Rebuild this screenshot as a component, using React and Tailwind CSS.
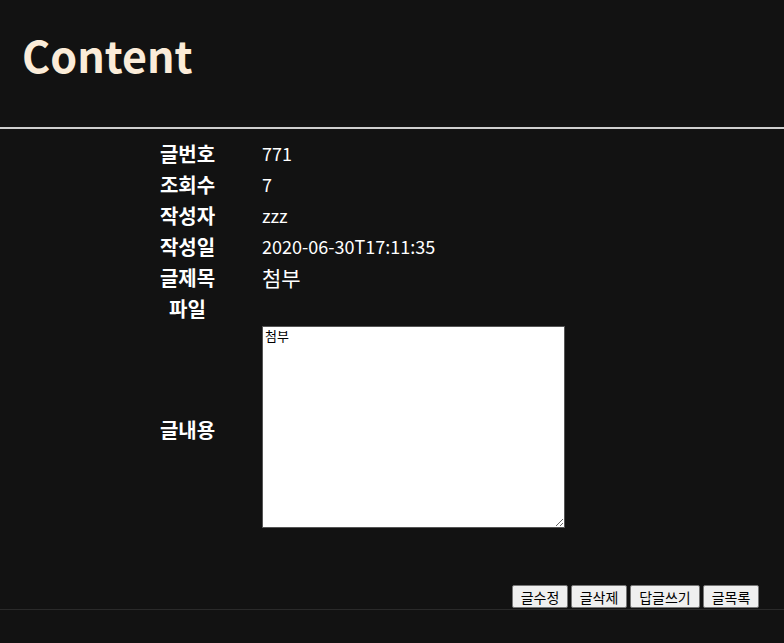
export default function App() {
    const rows = [
        ["글번호", "771"],
        ["조회수", "7"],
        ["작성자", "zzz"],
        ["작성일", "2020-06-30T17:11:35"],
        ["글제목", "첨부"],
        ["파일", ""],
    ];

    const buttons = [
        ["글수정", "w-[56px]"],
        ["글삭제", "w-[56px]"],
        ["답글쓰기", "w-[70px]"],
        ["글목록", "w-[56px]"],
    ];

    return (
        <div
            className="min-h-[643px] bg-[#121212] text-white"
            style={{ fontFamily: '"Noto Sans CJK KR", "Noto Sans", sans-serif' }}
        >
            <header className="h-[129px] border-b-2 border-[#cfcfcf] px-[22px] pt-[22px]">
                <h1 className="text-[43px] font-bold leading-[64px] text-[#fbecd9]">
                    Content
                </h1>
            </header>

            <div className="pt-[9px] pl-[140px]">
                {rows.map(([label, value]) => (
                    <div key={label} className="flex h-[31px] items-center">
                        <div className="w-[95px] text-center text-[20px] font-bold">
                            {label}
                        </div>
                        <div
                            className={
                                label === "글제목"
                                    ? "ml-[27px] text-[21px]"
                                    : "ml-[27px] text-[18px]"
                            }
                        >
                            {value}
                        </div>
                    </div>
                ))}

                <div className="mt-[2px] flex items-center">
                    <div className="w-[95px] pt-[5px] text-center text-[20px] font-bold">
                        글내용
                    </div>
                    <textarea
                        defaultValue="첨부"
                        className="ml-[27px] h-[202px] w-[303px] border border-[#555] bg-white p-[2px] text-[13px] leading-[16px] text-black"
                        style={{ fontFamily: '"DejaVu Sans Mono", "Noto Sans CJK KR", monospace' }}
                    />
                </div>
            </div>

            <div className="mt-[57px] mb-[1px] flex justify-end gap-[3px] border-b border-[#2a2a2a] pr-[25px] pb-[1px]">
                {buttons.map(([t, w]) => (
                    <button
                        key={t}
                        className={`${w} h-[23px] rounded-[2px] border border-[#767676] bg-[#efefef] px-0 text-[14px] leading-[18px] text-black`}
                        style={{ fontFamily: '"Noto Sans CJK KR", sans-serif' }}
                    >
                        {t}
                    </button>
                ))}
            </div>
        </div>
    );
}
